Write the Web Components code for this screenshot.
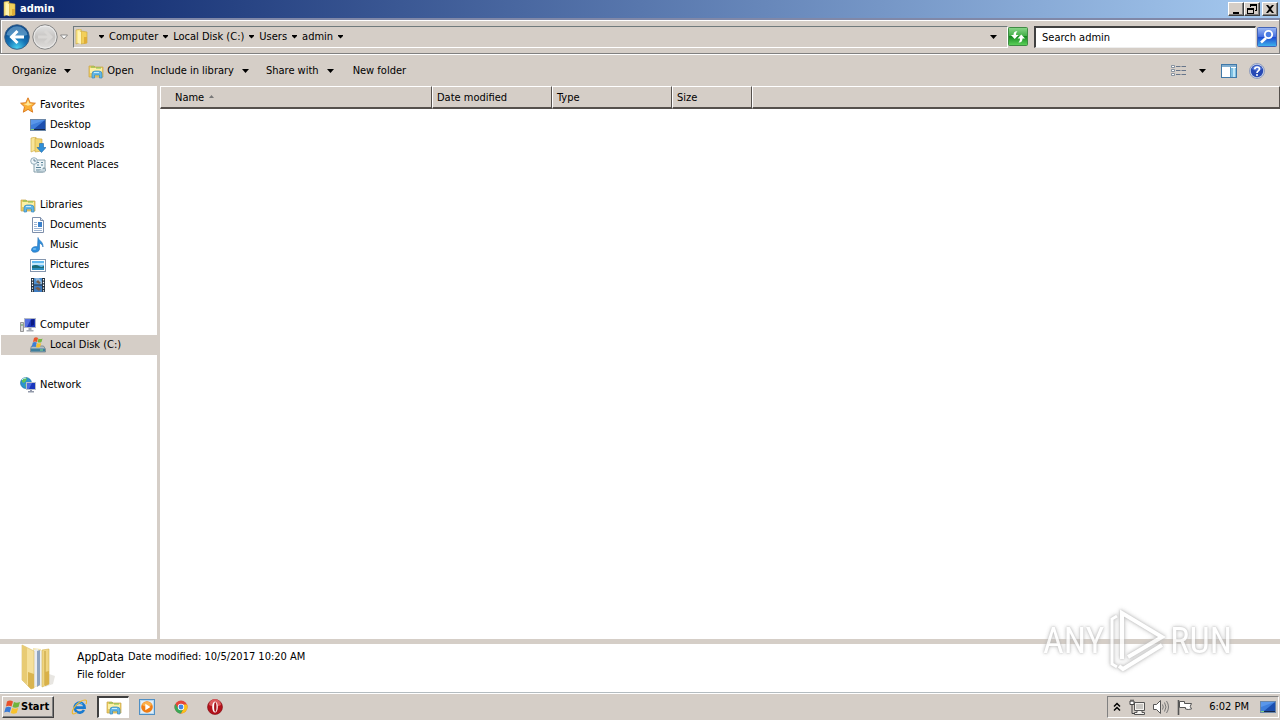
<!DOCTYPE html>
<html lang="en">
<head>
<meta charset="utf-8">
<title>admin</title>
<style>
  :root {
    --face: #d5cec7;
    --shade: #808080;
    --dark: #404040;
    --ui: "DejaVu Sans Condensed", "Noto Sans", sans-serif;
  }
  html, body { margin: 0; height: 100%; }
  body { font: 11px/20px var(--ui); color: #000; background: #fff; }
</style>
</head>
<body>
<desktop-screen></desktop-screen>

<script>
const ICONS = {
  folder: `<path d="M2 1l5-1v13l-5 2z" fill="#fbe88e" stroke="#c9a53a" stroke-width=".6"/><path d="M7 2l6 1v11l-6 1z" fill="#f3cf5a" stroke="#c9a53a" stroke-width=".6"/><path d="M4 2l3 1v12l-3-1z" fill="#fff3b4"/><path d="M10 8h3v6l-3 1z" fill="#dfae38"/>`,
  library: `<path d="M1 3h5l1 1h8v10H1z" fill="#eccb62" stroke="#c9a347" stroke-width=".7"/><path d="M2 5h12v5H2z" fill="#fdf0a5"/><path d="M3 4h4M8 5h5" stroke="#79c257" stroke-width="1"/><path d="M3 15v-4q0-3 3-3h4q3 0 3 3v4h-2.500v-3h-5v3z" transform="translate(1 0)" fill="#62b6e6" stroke="#3789be" stroke-width=".7"/><path d="M6 9.500h5" stroke="#c9ecfc" stroke-width="1"/>`,
  star: `<path d="M8 .8l2.200 4.900 5.200.5-3.900 3.600 1.200 5.400L8 12.400l-4.700 2.800 1.200-5.400L.6 6.200l5.200-.5z" fill="#fbb034" stroke="#d9761c" stroke-width=".9"/><path d="M8 3l1.400 3.500 3.600.4-5 1.800-4.500-1.800 3.100-.4z" fill="#ffe79a"/>`,
  desktop: `<rect x=".5" y="2.500" width="15" height="11" fill="#1c4fae" stroke="#6b87a8"/><path d="M1 3h14L4 12H1z" fill="#3f7fdc"/><path d="M1 3h14L1 8z" fill="#5a97ea"/><path d="M1 12h14v1H1z" fill="#16274b"/><path d="M1 12h3v1H1z" fill="#7fd07f"/>`,
  downloads: `<path d="M1 1l5-1v13l-5 2z" fill="#f8e59a" stroke="#c9a53a" stroke-width=".6"/><path d="M5 1.500l7 .5v12l-7 1z" fill="#f3d774" stroke="#c9a53a" stroke-width=".6"/><path d="M9.500 6.500h4v4H16l-4.500 5L7 10.500h2.500z" fill="#2f8fd8" stroke="#1c64a8" stroke-width=".6"/>`,
  recent: `<path d="M5 3h10v8h-2v4H4V6z" fill="#eaf2f6" stroke="#7d97a4" stroke-width=".9"/><path d="M7 5.500h2m2 0h2M7 8h2m2 0h2M6 10.500h5M6 13h5" stroke="#5b8499"/><path d="M13 11.500h2.500V14q-1 1.500-3 1H7" fill="#c6d6de" stroke="#7d97a4" stroke-width=".8"/><circle cx="4" cy="4" r="3.300" fill="#eef6fa" stroke="#7f9bab" stroke-width=".8"/><path d="M4 2v2h2" fill="none" stroke="#476b80" stroke-width=".8"/>`,
  document: `<path d="M2.500.5h8l3 3v12h-11z" fill="#fff" stroke="#7e8faa"/><path d="M10.500.5v3h3" fill="#dce5f2" stroke="#7e8faa"/><path d="M4 5.500h3M4 7.500h3M4 9.500h3M4 11.500h8M4 13.500h8" stroke="#9db4d2"/><path d="M8 5h4v5H8z" fill="#3980cb"/>`,
  music: `<path d="M8 .5c.5 3 5.500 4 5 9.500C12.500 8 11 6.500 9.500 6.300V12c0 4-8.500 4.500-8 .6.300-2.700 3.500-3.400 6-2.800z" fill="#2e8fdd" stroke="#216eb4" stroke-width=".6"/><ellipse cx="4.500" cy="12" rx="1.800" ry="1" fill="#6cb8f0"/>`,
  picture: `<rect x=".5" y="2.500" width="15" height="12" fill="#fff" stroke="#8496ae"/><path d="M2 4h12v9H2z" fill="#62b9f0"/><path d="M2 6h12v2H2z" fill="#c5e9fb"/><path d="M2 9q4-2 7 0t5-.5V13H2z" fill="#1d6a75"/><path d="M2 11h12v2H2z" fill="#2b8dbd"/>`,
  video: `<path d="M1 1h14v14H1z" fill="#22303e"/><path d="M4 1h8v6.500H4z" fill="#4d8fcf"/><path d="M4 8.500h8V15H4z" fill="#3d7cc2"/><path d="M5 1h4l3 4v2H8z" fill="#8cb7de"/><path d="M6 5l2-2 3 3-2 1zM5 11l3-1 3 2-2 2z" fill="#755c4a"/><path d="M2.500 2v13M13.500 2v13" stroke="#fff" stroke-width="1.200" stroke-dasharray="1.400 1.400"/>`,
  computer: `<path d="M.5 5.500h3v9h-3z" fill="#d8d8d8" stroke="#818181" stroke-width=".8"/><path d="M1 8h2" stroke="#50a050"/><rect x="4.500" y="1.500" width="11" height="9" fill="#1c36b8" stroke="#b3b9c6"/><path d="M5 2h6L7 10H5z" fill="#546fe0"/><path d="M11 3l3-1v6l-3 1z" fill="#0c1b83"/><path d="M8.500 11h3v2h2v1.500h-7V13h2z" fill="#a9adb5"/>`,
  disk: `<path d="M1.500 9h12l2 3v3H.5v-3z" fill="#b4bec4" stroke="#6b7880" stroke-width=".7"/><path d="M1 11.500h14v3H1z" fill="#3f7f9c"/><path d="M10 13h3" stroke="#8ce08c"/><path d="M4 1q2-1.500 4 0L7 5q-2-1-4 0z" fill="#e8552b"/><path d="M8.500 1.500q2 1.200 4 0L11.500 5q-2 1-4 0z" fill="#73b73d"/><path d="M2.800 5.600q2-1 4 0L5.700 10q-2-1-4 0z" fill="#3d7fd4"/><path d="M7.300 6q2 1 4 0L10 10q-2 1-4 0z" fill="#f6c02c"/>`,
  network: `<circle cx="6" cy="6" r="5.500" fill="#2b93cf" stroke="#1d6c9b" stroke-width=".6"/><path d="M2 3q3-3 5-2L6 4 4 6 2 5zM5 7l3 1-2 3z" fill="#5ec05a"/><path d="M2 3q1-2 4-2" stroke="#c3ecf7" fill="none"/><rect x="6.500" y="5.500" width="9" height="7" fill="#1936bd" stroke="#b8bfcc"/><path d="M7 6h5l-3 6H7z" fill="#4a6ae0"/><path d="M10 13h2v1h2v1.500H8V14h2z" fill="#9299aa"/>`,
  views: `<path d="M.5 1.500h3v2h-3zM.5 5.500h3v2h-3zM.5 9.500h3v2h-3z" fill="#fff" stroke="#6f7d8f" stroke-width=".8" transform="translate(0 1)"/><path d="M5 3.500h4.500m1 0H15M5 7.500h4.500m1 0H15M5 11.500h4.500m1 0H15" stroke="#66758a"/>`,
  preview: `<rect x=".5" y="1.500" width="15" height="13" fill="#fff" stroke="#3f78a8"/><path d="M1 2h14v2H1z" fill="#4b87b6"/><path d="M1 3h14" stroke="#b8d5ea"/><path d="M10 5h5v9h-5z" fill="#7fc0e2"/><path d="M12 5h2v9h-2z" fill="#c3e6f6"/><path d="M9.500 4v10" stroke="#5796c0"/>`,
  help: `<circle cx="8" cy="8" r="7.500" fill="#c9d3e8" stroke="#7588b5" stroke-width=".7"/><circle cx="8" cy="8" r="6.200" fill="#2749b5"/><path d="M3 6a5.300 5.300 0 0 1 10 0Q8 9 3 6" fill="#5578d6"/><path d="M5.800 6.300c0-3 4.700-3 4.700-.3C10.500 8 8 7.800 8 10" fill="none" stroke="#fff" stroke-width="1.700"/><circle cx="8" cy="12" r="1" fill="#fff"/>`,
  magnifier: `<defs><linearGradient id="m" x2="0" y2="1"><stop stop-color="#9db9f4"/><stop offset=".48" stop-color="#4670e0"/><stop offset=".5" stop-color="#1c46cf"/><stop offset="1" stop-color="#3fb6ee"/></linearGradient></defs><rect x=".5" y=".5" width="19" height="19" rx="1" fill="url(#m)" stroke="#4363b5"/><path d="M9 11l-5 4.500" stroke="#fff" stroke-width="2.600"/><circle cx="11.500" cy="7.500" r="3.700" fill="#4b7de4" stroke="#fff" stroke-width="1.800"/>`,
  refresh: `<defs><linearGradient id="r" x2="0" y2="1"><stop stop-color="#8cd68c"/><stop offset=".48" stop-color="#3fae45"/><stop offset=".5" stop-color="#14891f"/><stop offset="1" stop-color="#5fd45c"/></linearGradient></defs><rect x=".5" y=".5" width="19" height="18" rx="1" fill="url(#r)" stroke="#3f8b43"/><path d="M9.500 4.200C6.500 4 5.500 5.500 5.500 8H3l3.700 4L10.500 8H8c0-1.500.2-2.500 1.500-3.800zM10.500 15.500c3 .2 4-1.500 4-4H17l-3.700-4-3.800 4H12c0 1.500-.2 2.500-1.500 4z" fill="#fff"/>`,
  back: `<defs><radialGradient id="b" cx=".5" cy=".95" r=".8"><stop stop-color="#49d0f0"/><stop offset=".5" stop-color="#1573b5"/><stop offset="1" stop-color="#0d4c8d"/></radialGradient></defs><circle cx="13" cy="13" r="12.300" fill="url(#b)" stroke="#3d5f82" stroke-width=".9"/><path d="M2.500 11a10.700 10.700 0 0 1 21 0q-10.500 3-21 0" fill="#8fc4e6" opacity=".5"/><path d="M20 13H8m5.500-6L7.500 13l6 6" fill="none" stroke="#fff" stroke-width="3"/>`,
  forward: `<defs><linearGradient id="f" x2="0" y2="1"><stop stop-color="#e4e4e4"/><stop offset=".5" stop-color="#c6c4c2"/><stop offset="1" stop-color="#e2e0de"/></linearGradient></defs><circle cx="13" cy="13" r="12.200" fill="url(#f)" stroke="#858585"/><circle cx="13" cy="13" r="11" fill="none" stroke="#f0f0f0" stroke-width=".8"/><path d="M6 13h12m-5-6l6 6-6 6" fill="none" stroke="#d9d7d5" stroke-width="3"/>`,
  minimize: `<path d="M3 9h6v2H3z"/>`,
  restore: `<path d="M4 1h7v7H9V7h1V3H5v1H4zM1 5h7v6H1zM2 7v3h5V7z" fill-rule="evenodd"/>`,
  close: `<path d="M2 2h2l2 2 2-2h2L7 6l3 4H8L6 8l-2 2H2l3-4z"/>`,
  windows: `<path d="M3 2.500q3-2 6 0L7.500 7.500q-2.800-1.500-5.500 0z" fill="#e8502a"/><path d="M10 3q2.500 1.500 6 0L14.500 8Q11 9.500 8.500 8z" fill="#6fb43c"/><path d="M1.700 8.500q2.800-1.500 5.500 0L5.700 13.500q-2.500-1.500-5.500 0z" fill="#3a7bd6"/><path d="M8.200 9q2.800 1.500 6 0L12.700 14q-3.200 1.500-6 0z" fill="#f8c22c"/>`,
  ie: `<path d="M13 11a5 5 0 1 1 .6-2.400H5" fill="none" stroke="#1a7bd0" stroke-width="2.600"/><path d="M4.500 6.500a4.500 4.500 0 0 1 7-1.500" fill="none" stroke="#56b4f2"/><path d="M2 15C-1 12 8 1 14 1c2 0 2 2 1 4" fill="none" stroke="#edb72d" stroke-width="1.200"/><path d="M2 15q2 0 4-1.500" fill="none" stroke="#edb72d"/>`,
  player: `<rect x=".5" y=".5" width="15" height="15" fill="#b9d9f0" stroke="#4f8fc4"/><rect x="2" y="2" width="12" height="12" fill="#e1eff9"/><circle cx="8" cy="8" r="5.800" fill="#f07c12"/><path d="M3 6a5.500 5.500 0 0 1 10 0Q8 9 3 6" fill="#fbb04c"/><path d="M6.300 4.800L11.500 8l-5.200 3.200z" fill="#fff"/>`,
  chrome: `<circle cx="8" cy="8" r="6.500" fill="#e4463a"/><path d="M2.300 4.800A6.500 6.500 0 0 0 8 14.500L11 9 5 9z" fill="#3aa757"/><path d="M14 5.500A6.500 6.500 0 0 1 8 14.500L11 9l-.5-3.500z" fill="#fbc11a"/><circle cx="8" cy="8" r="3.200" fill="#fff"/><circle cx="8" cy="8" r="2.400" fill="#4285e4"/>`,
  opera: `<circle cx="8" cy="8" r="7.500" fill="#b3121b" stroke="#7d0c12" stroke-width=".6"/><path d="M2 6a6 6 0 0 1 12 0q-6 3-12 0" fill="#dc5a5c"/><ellipse cx="8" cy="8" rx="2.800" ry="5.500" fill="#fff"/><ellipse cx="8.300" cy="8" rx="1.200" ry="4.700" fill="#a51118"/>`,
  chevrons: `<path d="M1 5.500l3-3 3 3M1 9.500l3-3 3 3" fill="none" stroke="#000" stroke-width="1.500"/>`,
  lan: `<path d="M5.500 3.500h10v8h-10zM8 11.500v2H5.500v2h10v-2H13v-2" fill="#f4f2ee" stroke="#555"/><path d="M7 5h7v5H7z" fill="#c8c6c2"/><path d="M1 2h4v3.500H1z" fill="#fff" stroke="#444"/><path d="M2 .5v2m2-2v2M3 5.500v9h3" fill="none" stroke="#444"/>`,
  volume: `<path d="M.5 5.500h3l4-4v13l-4-4h-3z" fill="#fff" stroke="#555"/><path d="M9.500 5.500q1.500 2.500 0 5M11.500 3.500q3 4.500 0 9M13.500 2q4 6 0 12" fill="none" stroke="#777"/>`,
  flag: `<path d="M1.500 1v15" stroke="#555" stroke-width="1.600"/><path d="M2.500 2.500h5v2h7q-2.500 3 0 5.500-3.500 1-6 0V8.500h-6z" fill="#fff" stroke="#555"/>`,
  appfolder: `<path d="M30 30l6 2-2 8-8 3z" fill="#d9d6cf" opacity=".6"/><path d="M14 4l8 1v36l-8 3z" fill="#f2e6b4"/><path d="M15 6l4-1v36l-4 2z" fill="#e9edf2"/><path d="M18 7l3-1v35l-3 2z" fill="#8ea4c0"/><path d="M21 7l3-1v35l-3 1z" fill="#eef0ee"/><path d="M23 6l7-1v35l-7 3z" fill="#f0d581" stroke="#d1b251" stroke-width=".6"/><path d="M26 7v34" stroke="#c09d3a"/><path d="M26 28l4-1v13l-4 2z" fill="#d9b148"/><path d="M3 1l12 6v37l-3 1-9-9z" fill="#f5e09b" stroke="#d5bb68" stroke-width=".6"/><path d="M3 1l5 2.500V40l-5-4z" fill="#e8cb74"/><path d="M9 28l6 2v14l-3 1-3-3z" fill="#d9b450"/>`
};

const sheet = (css) => `<style>:host{box-sizing:border-box}*{box-sizing:border-box}button{font:inherit;color:inherit;background:none;border:0;padding:0;margin:0}a{color:inherit;text-decoration:none}${css}</style>`;

class Base extends HTMLElement {
  connectedCallback() {
    if (this.shadowRoot) return;
    this.attachShadow({ mode: "open" }).innerHTML = this.render();
  }
}
const define = (name, render) =>
  customElements.define(name, class extends Base { render() { return render(this); } });

/* <ui-icon name w h>: glyph from the ICONS table */
define("ui-icon", (el) => {
  const w = el.getAttribute("w") || 16, h = el.getAttribute("h") || w;
  return sheet(`:host{display:block;flex:none;width:${w}px;height:${h}px}svg{display:block}`) +
    `<svg width="${w}" height="${h}" viewBox="0 0 ${w} ${h}" aria-hidden="true">${ICONS[el.getAttribute("name")]}</svg>`;
});

/* <down-arrow>: small solid triangle */
define("down-arrow", (el) => {
  const big = el.hasAttribute("big");
  return sheet(`:host{display:block;flex:none;width:7px;height:4px}svg{display:block}`) +
    `<svg width="7" height="4" viewBox="0 0 7 4" aria-hidden="true"><path d="${big ? "M0 0h7L3.500 4z" : "M1 0h5v1L3.500 3.500 1 1z"}"/></svg>`;
});

define("title-bar", () => sheet(`
  :host{display:flex;align-items:center;height:18px;padding:0 2px;color:#fff;font-weight:bold;
    background:linear-gradient(90deg,#0a246a,#a6caf0)}
  h1{flex:1;margin:0 0 0 2px;font:inherit}
  button{display:grid;place-items:center;width:16px;height:14px;background:var(--face);color:#000;
    border:1px solid;border-color:#fff var(--dark) var(--dark) #fff;box-shadow:inset -1px -1px var(--shade)}
  button:last-child{margin-left:2px}`) + `
  <ui-icon name="folder"></ui-icon><h1>admin</h1>
  <button aria-label="Minimize"><ui-icon name="minimize" w="12"></ui-icon></button>
  <button aria-label="Restore"><ui-icon name="restore" w="12"></ui-icon></button>
  <button aria-label="Close"><ui-icon name="close" w="12"></ui-icon></button>`);

define("address-bar", () => sheet(`
  :host{display:flex;align-items:center;height:36px;padding:0 2px 0 3px;background:var(--face);
    border:1px solid var(--shade);border-top:2px solid #8088a8;box-shadow:inset 1px 1px #fff}
  .round{margin-right:2px}
  .recent{width:8px;margin-right:5px}
  nav{flex:1;display:flex;align-items:center;height:22px;padding:0 10px 0 0;border:1px solid;
    border-color:#6f7a7c #fff #fff #6f7a7c}
  ol{flex:1;display:flex;align-items:center;list-style:none;margin:0 0 0 8px;padding:0;gap:4px}
  li{display:flex;align-items:center;gap:4px}
  .refresh{margin-right:6px}
  input{width:222px;height:22px;padding:1px 6px;border:2px solid;border-color:var(--dark) #eee #eee var(--dark);
    border-width:2px 1px 1px 2px;background:#fff;font:inherit;outline:0;border-radius:0}
  input::placeholder{color:#000;opacity:1}
  .go{margin-left:1px}`) + `
  <button class="round" aria-label="Back"><ui-icon name="back" w="26"></ui-icon></button>
  <button class="round" aria-label="Forward"><ui-icon name="forward" w="26"></ui-icon></button>
  <button class="recent" aria-label="Recent pages"><svg width="8" height="6" style="display:block"><path d="M.5 1h7L4 5z" fill="#fff" stroke="#777" stroke-width=".8"/></svg></button>
  <nav aria-label="Address"><ui-icon name="folder"></ui-icon>
    <ol><li><down-arrow></down-arrow></li>
      <li><a href="#computer">Computer</a><down-arrow></down-arrow></li>
      <li><a href="#c">Local Disk (C:)</a><down-arrow></down-arrow></li>
      <li><a href="#users">Users</a><down-arrow></down-arrow></li>
      <li><a href="#admin">admin</a><down-arrow></down-arrow></li></ol>
    <button aria-label="Previous locations"><down-arrow big></down-arrow></button></nav>
  <button class="refresh" aria-label="Refresh"><ui-icon name="refresh" w="20" h="19"></ui-icon></button>
  <input type="search" placeholder="Search admin" aria-label="Search admin">
  <button class="go" aria-label="Search"><ui-icon name="magnifier" w="20"></ui-icon></button>`);

define("command-bar", () => sheet(`
  :host{display:flex;align-items:center;height:32px;padding:0 15px 0 12px;background:var(--face);border-top:1px solid #fff}
  button{display:flex;align-items:center;gap:8px}
  .open{gap:3px}
  .left{flex:1;display:flex;gap:17px;align-items:center}
  .left button:last-child{margin-left:2px}
  .right{display:flex;align-items:center;gap:12px}
  .more{margin-right:3px}`) + `
  <div class="left">
    <button>Organize<down-arrow big></down-arrow></button>
    <button class="open"><ui-icon name="library"></ui-icon>Open</button>
    <button>Include in library<down-arrow big></down-arrow></button>
    <button>Share with<down-arrow big></down-arrow></button>
    <button>New folder</button></div>
  <div class="right">
    <button aria-label="Change view"><ui-icon name="views"></ui-icon></button>
    <button class="more" aria-label="More views"><down-arrow big></down-arrow></button>
    <button aria-label="Preview pane"><ui-icon name="preview"></ui-icon></button>
    <button aria-label="Help"><ui-icon name="help"></ui-icon></button></div>`);

/* <nav-item icon>: one tree row; "child" indents it, "selected" fills it */
define("nav-item", (el) => sheet(`
  :host{display:block}
  a{display:flex;align-items:center;gap:4px;height:20px;padding-left:19px;line-height:22px}
  :host([child]) a{padding-left:29px}
  :host([selected]) a{background:var(--face)}`) +
  `<a href="#"><ui-icon name="${el.getAttribute("icon")}"></ui-icon><span><slot></slot></span></a>`);

define("nav-pane", () => sheet(`
  :host{display:flex;flex-direction:column;gap:20px;flex:none;width:160px;padding:9px 0 0 1px;background:#fff;border-right:3px solid var(--face)}`) + `
  <section><nav-item icon="star">Favorites</nav-item><nav-item child icon="desktop">Desktop</nav-item>
    <nav-item child icon="downloads">Downloads</nav-item><nav-item child icon="recent">Recent Places</nav-item></section>
  <section><nav-item icon="library">Libraries</nav-item><nav-item child icon="document">Documents</nav-item>
    <nav-item child icon="music">Music</nav-item><nav-item child icon="picture">Pictures</nav-item>
    <nav-item child icon="video">Videos</nav-item></section>
  <section><nav-item icon="computer">Computer</nav-item><nav-item child selected icon="disk">Local Disk (C:)</nav-item></section>
  <section><nav-item icon="network">Network</nav-item></section>`);

define("file-list", () => sheet(`
  :host{display:block;flex:1;background:#fff}
  table{width:100%;table-layout:fixed;border-collapse:separate;border-spacing:0}
  th{height:23px;padding:2px 0 0 4px;text-align:left;font-weight:normal;line-height:16px;background:var(--face);
    border:solid;border-width:1px 1px 2px;border-color:#fff #55504c #55504c #fff}
  th:first-child{width:272px;padding-left:14px}
  .mid{width:120px}.size{width:80px}
  svg{margin:0 0 3px 5px}`) + `
  <table><thead><tr><th>Name<svg width="5" height="3" aria-hidden="true"><path d="M0 3h5L2.500 0z" fill="#777"/></svg></th>
    <th class="mid">Date modified</th><th class="mid">Type</th><th class="size">Size</th><th aria-hidden="true"></th></tr></thead></table>`);

define("details-pane", () => sheet(`
  :host{display:flex;gap:20px;height:53px;padding-left:19px;background:#fff;border-top:5px solid var(--face)}
  dl{margin:4px 0 0;line-height:18px}
  div{display:flex;gap:4px}
  dt,dd{margin:0}
  .name{font-size:12px}`) + `
  <ui-icon name="appfolder" w="38" h="46"></ui-icon>
  <dl><div><dt class="name">AppData</dt><dd>Date modified: 10/5/2017 10:20 AM</dd></div><div><dd>File folder</dd></div></dl>`);

define("task-bar", () => sheet(`
  :host{display:flex;align-items:center;height:28px;padding:2px 1px 2px 2px;background:var(--face);border-top:1px solid #b4bcc0;box-shadow:inset 0 1px #fff}
  .start{display:flex;align-items:center;gap:1px;width:52px;height:22px;padding-left:1px;font-weight:bold;
    border:1px solid;border-color:#fff var(--dark) var(--dark) #fff;box-shadow:inset -1px -1px var(--shade)}
  .apps{flex:1;display:flex;gap:2px;margin-left:9px}
  .apps button{display:grid;place-items:center;width:32px;height:22px}
  .apps .on{background:#fff;border:solid;border-width:2px 1px 1px 2px;border-color:var(--dark) #fff #fff var(--dark)}
  .tray{display:flex;align-items:center;gap:8px;height:22px;padding:0 2px 0 5px;border:1px solid;border-color:var(--shade) #fff #fff var(--shade)}
  time{margin:0 3px 0 8px}`) + `
  <button class="start"><ui-icon name="windows"></ui-icon>Start</button>
  <div class="apps"><button aria-label="Internet Explorer"><ui-icon name="ie"></ui-icon></button>
    <button class="on" aria-label="Explorer"><ui-icon name="library"></ui-icon></button>
    <button aria-label="Media Player"><ui-icon name="player"></ui-icon></button>
    <button aria-label="Chrome"><ui-icon name="chrome"></ui-icon></button>
    <button aria-label="Opera"><ui-icon name="opera"></ui-icon></button></div>
  <div class="tray"><button aria-label="Show hidden icons"><ui-icon name="chevrons" w="8" h="12"></ui-icon></button>
    <ui-icon name="lan"></ui-icon><ui-icon name="volume"></ui-icon><ui-icon name="flag"></ui-icon>
    <time>6:02 PM</time><ui-icon name="desktop"></ui-icon></div>`);

define("any-run", () => sheet(`
  :host{position:absolute;right:48px;bottom:47px;display:flex;align-items:center;gap:4px;pointer-events:none;
    color:#fff;font:36px/64px "Roboto Condensed","Open Sans Condensed",Roboto,sans-serif;opacity:.85;
    text-shadow:0 0 2px #b5b5b5,0 0 4px #b0b0b0}
  svg{display:block;filter:drop-shadow(0 0 1px #b8b8b8) drop-shadow(0 0 2px #c0c0c0)}`) + `
  <span>ANY</span>
  <svg width="58" height="64" viewBox="0 0 58 64" fill="none" stroke="#fff" aria-hidden="true"><path d="M9 7L4 10v45l5 3" stroke-width="3"/><path d="M14 50V4l40 24-34 20" stroke-width="4"/><path d="M11 57l4 3 39-24" stroke-width="4"/></svg>
  <span>RUN</span>`);

define("desktop-screen", () => sheet(`
  :host{position:relative;display:flex;flex-direction:column;min-height:100vh;background:#fff}
  main{flex:1;display:flex}`) + `
  <title-bar></title-bar><address-bar></address-bar><command-bar></command-bar>
  <main><nav-pane></nav-pane><file-list></file-list></main>
  <details-pane></details-pane><task-bar></task-bar><any-run></any-run>`);
</script>
</body>
</html>
